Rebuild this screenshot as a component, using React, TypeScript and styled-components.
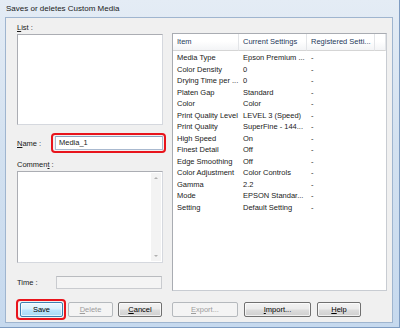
import React from 'react';
import styled, { createGlobalStyle } from 'styled-components';

const GlobalStyle = createGlobalStyle`
  html, body {
    margin: 0;
    padding: 0;
  }
  body {
    width: 400px;
    height: 328px;
    overflow: hidden;
    font-family: "Liberation Sans", Arial, sans-serif;
    font-size: 7.5px;
    color: #1a1a1a;
  }
  u {
    text-decoration: underline;
    text-underline-offset: 1px;
  }
`;

const Window = styled.div`
  width: 400px;
  height: 328px;
  box-sizing: border-box;
  display: flex;
  flex-direction: column;
  background: linear-gradient(180deg, #e4ecf5 0%, #d3e1f0 45%, #c6d9ee 100%);
  border-right: 1px solid #7e9cc2;
  border-bottom: 1px solid #7e9cc2;
`;

const TitleBar = styled.div`
  height: 17px;
  display: flex;
  align-items: center;
  padding-left: 6px;
  font-size: 8px;
  color: #1a1a1a;
`;

const Client = styled.div`
  margin: 0 6px 4px 5px;
  border: 1px solid #9fb5cf;
  background: #f0f0f0;
  padding: 4px 4px 5px 11px;
  display: flex;
  flex-direction: column;
`;

const Body = styled.div`
  display: grid;
  grid-template-columns: 146px 215px;
  column-gap: 9px;
  align-items: start;
`;

const LeftColumn = styled.div`
  display: flex;
  flex-direction: column;
`;

const Label = styled.div<{ $gap?: number }>`
  height: 12px;
  line-height: 12px;
  margin-top: ${({ $gap }) => $gap ?? 0}px;
`;

const Box = styled.div<{ $height: number; $gap?: number }>`
  position: relative;
  box-sizing: border-box;
  height: ${({ $height }) => $height}px;
  margin-top: ${({ $gap }) => $gap ?? 0}px;
  background: #fff;
  border: 1px solid #abadb3;
  border-right-color: #d5d8de;
  border-bottom-color: #d5d8de;
  display: flex;
  justify-content: flex-end;
`;

const ScrollBar = styled.div`
  width: 10px;
  margin: 1px 1px 1px 0;
  background: #f3f3f3;
  display: flex;
  flex-direction: column;
  justify-content: space-between;
  align-items: center;
  padding: 4px 0;
`;

const Arrow = styled.div<{ $down?: boolean }>`
  width: 0;
  height: 0;
  border-left: 2.5px solid transparent;
  border-right: 2.5px solid transparent;
  ${({ $down }) =>
    $down ? 'border-top: 2.5px solid #b0b0b0;' : 'border-bottom: 2.5px solid #b0b0b0;'}
`;

const FieldRow = styled.div<{ $gap: number; $labelWidth: number }>`
  display: flex;
  align-items: center;
  margin-top: ${({ $gap }) => $gap}px;

  & > span {
    width: ${({ $labelWidth }) => $labelWidth}px;
    flex: none;
  }
`;

const Field = styled.div<{ $disabled?: boolean; $height: number; $inset?: number }>`
  position: relative;
  flex: 1;
  box-sizing: border-box;
  height: ${({ $height }) => $height}px;
  margin-right: ${({ $inset }) => $inset ?? 0}px;
  line-height: ${({ $height }) => $height - 2}px;
  padding-left: 3px;
  background: ${({ $disabled }) => ($disabled ? '#f4f4f4' : '#fff')};
  border: 1px solid ${({ $disabled }) => ($disabled ? '#c9cbcf' : '#a9b9cf')};
  border-top-color: ${({ $disabled }) => ($disabled ? '#b9bbbf' : '#8aa2c0')};
`;

const Highlight = styled.div`
  position: absolute;
  inset: -4px -4px -4px -5px;
  border: 2px solid #e8141c;
  border-radius: 4px;
  pointer-events: none;
`;

const Panel = styled.div`
  margin-top: 11px;
  height: 258px;
  box-sizing: border-box;
  background: #fff;
  border: 1px solid #a9acb2;
  border-right-color: #c8ccd2;
  border-bottom-color: #c8ccd2;
`;

const Table = styled.div`
  display: grid;
  grid-template-columns: 66px 68px 68px 1fr;
`;

const HeadCell = styled.div`
  height: 16px;
  line-height: 16px;
  padding-left: 4px;
  white-space: nowrap;
  overflow: hidden;
  color: #1e395b;
  background: linear-gradient(180deg, #ffffff 0%, #ffffff 45%, #f3f4f6 100%);
  border-right: 1px solid #e3e5e8;
  border-bottom: 1px solid #d5d5d5;
  margin-bottom: 1px;
`;

const Cell = styled.div`
  height: 11.5px;
  line-height: 11.5px;
  padding-left: 4px;
  white-space: nowrap;
  overflow: hidden;
`;

const ButtonRow = styled.div`
  display: flex;
  margin-top: 11px;
  padding-left: 3px;
`;

const ButtonGroup = styled.div<{ $gap: number; $shift?: number }>`
  display: flex;
  gap: ${({ $gap }) => $gap}px;
  margin-left: ${({ $shift }) => $shift ?? 0}px;
`;

const Button = styled.div<{ $width: number; $disabled?: boolean; $default?: boolean }>`
  position: relative;
  box-sizing: border-box;
  width: ${({ $width }) => $width}px;
  height: 15px;
  line-height: 13px;
  text-align: center;
  border-radius: 2px;
  border: 1px solid
    ${({ $disabled, $default }) => ($disabled ? '#b5b9bd' : $default ? '#3c7fb1' : '#707070')};
  color: ${({ $disabled }) => ($disabled ? '#9d9d9d' : '#000')};
  background: ${({ $disabled, $default }) =>
    $disabled
      ? '#f4f4f4'
      : $default
        ? 'linear-gradient(180deg, #eaf6fd 0%, #d9f0fc 48%, #bee6fd 52%, #a7d9f5 100%)'
        : 'linear-gradient(180deg, #f2f2f2 0%, #ebebeb 48%, #dddddd 52%, #cfcfcf 100%)'};
  box-shadow: inset 0 0 0 1px
    ${({ $disabled }) => ($disabled ? 'transparent' : 'rgba(255, 255, 255, 0.7)')};
`;

const settings = [
  ['Media Type', 'Epson Premium ...'],
  ['Color Density', '0'],
  ['Drying Time per ...', '0'],
  ['Platen Gap', 'Standard'],
  ['Color', 'Color'],
  ['Print Quality Level', 'LEVEL 3 (Speed)'],
  ['Print Quality', 'SuperFine - 144...'],
  ['High Speed', 'On'],
  ['Finest Detail', 'Off'],
  ['Edge Smoothing', 'Off'],
  ['Color Adjustment', 'Color Controls'],
  ['Gamma', '2.2'],
  ['Mode', 'EPSON Standar...'],
  ['Setting', 'Default Setting'],
];

const App = () => {
  return (
    <>
      <GlobalStyle />
      <Window>
        <TitleBar>Saves or deletes Custom Media</TitleBar>
        <Client>
          <Body>
            <LeftColumn>
              <Label>
                <u>L</u>ist :
              </Label>
              <Box $height={91} />
              <FieldRow $gap={11} $labelWidth={38}>
                <span>
                  <u>N</u>ame :
                </span>
                <Field $height={14}>
                  Media_1
                  <Highlight />
                </Field>
              </FieldRow>
              <Label $gap={9}>
                Commen<u>t</u> :
              </Label>
              <Box $height={92}>
                <ScrollBar>
                  <Arrow />
                  <Arrow $down />
                </ScrollBar>
              </Box>
              <FieldRow $gap={13} $labelWidth={39}>
                <span>Time :</span>
                <Field $height={13} $disabled $inset={1} />
              </FieldRow>
            </LeftColumn>
            <Panel>
              <Table>
                <HeadCell>Item</HeadCell>
                <HeadCell>Current Settings</HeadCell>
                <HeadCell>Registered Setti...</HeadCell>
                <HeadCell />
                {settings.map(([item, value]) => (
                  <React.Fragment key={item}>
                    <Cell>{item}</Cell>
                    <Cell>{value}</Cell>
                    <Cell>-</Cell>
                    <Cell />
                  </React.Fragment>
                ))}
              </Table>
            </Panel>
          </Body>
          <ButtonRow>
            <ButtonGroup $gap={5}>
              <Button $width={43} $default>
                Save
                <Highlight />
              </Button>
              <Button $width={45} $disabled>
                <u>D</u>elete
              </Button>
              <Button $width={44}>
                <u>C</u>ancel
              </Button>
            </ButtonGroup>
            <ButtonGroup $gap={6} $shift={10}>
              <Button $width={66} $disabled>
                <u>E</u>xport...
              </Button>
              <Button $width={67}>
                <u>I</u>mport...
              </Button>
              <Button $width={44}>
                <u>H</u>elp
              </Button>
            </ButtonGroup>
          </ButtonRow>
        </Client>
      </Window>
    </>
  );
};

export default App;
